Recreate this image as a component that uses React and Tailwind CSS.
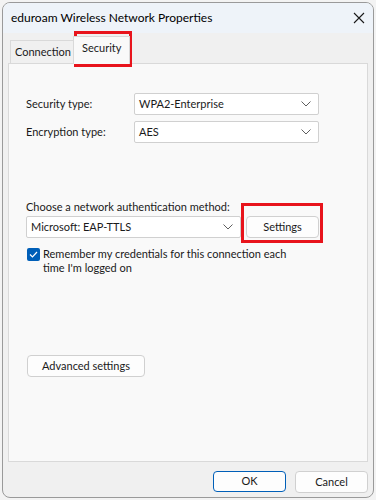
import React from 'react';

function Chevron() {
  return (
    <svg width="10" height="6" viewBox="0 0 10 6" className="shrink-0">
      <path d="M0.5 0.5 L5 5 L9.5 0.5" fill="none" stroke="#5f5f5f" strokeWidth="1" />
    </svg>
  );
}

function Select({ value, className }) {
  return (
    <div className={`h-[22px] bg-white border border-[#d0d0d0] rounded-[2px] flex items-center justify-between pl-[4px] pr-[7px] ${className}`}>
      <span>{value}</span>
      <Chevron />
    </div>
  );
}

function Button({ children, className }) {
  return (
    <div className={`h-[22px] bg-[#fdfdfd] border border-[#d0d0d0] rounded-[4px] flex items-center justify-center ${className}`}>
      {children}
    </div>
  );
}

export default function App() {
  return (
    <div
      className="w-[376px] h-[500px] bg-[#f3f3f3] pt-[2px] pl-[2px] relative overflow-hidden text-[11px] text-[#1a1a1a]"
      style={{ fontFamily: 'Lato, "Liberation Sans", sans-serif' }}
    >
      {/* Window */}
      <div className="w-[372px] h-[496px] bg-[#f0f0f0] border border-[#9a9a9a] rounded-[8px] overflow-hidden flex flex-col">
        {/* Title bar */}
        <div className="h-[30px] shrink-0 bg-[#eef3f9] flex items-center justify-between pl-[8px] pr-[5px]">
          <span className="text-[12px] text-black">eduroam Wireless Network Properties</span>
          <svg width="12" height="12" viewBox="0 0 12 12" className="mr-[3px]">
            <path d="M1 1 L11 11 M11 1 L1 11" stroke="#1a1a1a" strokeWidth="1.1" />
          </svg>
        </div>

        {/* Tabs */}
        <div className="h-[30px] shrink-0 flex items-end pl-[7px]">
          <div className="h-[23px] w-[63px] pl-[4px] flex items-center bg-[#f0f0f0] border border-b-0 border-[#d9d9d9] border-r-0 whitespace-nowrap">
            Connection
          </div>
          <div className="h-[28px] w-[57px] pl-[8px] flex items-start pt-[3px] bg-[#f9f9f9] border border-b-0 border-[#d9d9d9] -mb-px relative z-10">
            Security
          </div>
        </div>

        {/* Panel */}
        <div className="ml-[5px] w-[360px] h-[399px] bg-[#f9f9f9] border border-[#d9d9d9] pl-[17px] pr-[48px] pt-[29px]">
          <div className="flex items-center">
            <span className="w-[108px]">Security type:</span>
            <Select value="WPA2-Enterprise" className="w-[185px]" />
          </div>
          <div className="flex items-center mt-[6px]">
            <span className="w-[108px]">Encryption type:</span>
            <Select value="AES" className="w-[185px]" />
          </div>

          <div className="mt-[56px] leading-[16px]">Choose a network authentication method:</div>
          <div className="flex items-center mt-[1px]">
            <Select value="Microsoft: EAP-TTLS" className="w-[215px]" />
            <Button className="w-[73px] ml-[5px] h-[21px]">Settings</Button>
          </div>
          <div className="flex items-start mt-[9px] pl-[1px]">
            <div className="w-[13px] h-[13px] mt-[1px] rounded-[2px] bg-[#005fb8] flex items-center justify-center shrink-0">
              <svg width="9" height="7" viewBox="0 0 9 7">
                <path d="M1 3.5 L3.5 6 L8 1" fill="none" stroke="white" strokeWidth="1.2" />
              </svg>
            </div>
            <div className="ml-[3px] leading-[14px] w-[250px]">
              Remember my credentials for this connection each time I'm logged on
            </div>
          </div>

          <Button className="w-[118px] mt-[80px] ml-[1px]">Advanced settings</Button>
        </div>

        {/* Footer */}
        <div className="flex justify-end gap-[9px] pr-[5px] mt-[9px]">
          <div className="w-[73px] h-[21px] bg-[#fdfdfd] border border-[#005fb8] rounded-[4px] flex items-center justify-center">
            OK
          </div>
          <Button className="w-[73px] h-[21px]">Cancel</Button>
        </div>
      </div>

      {/* Annotation boxes */}
      <div className="absolute left-[74px] top-[31px] w-[58px] h-[36px] border-[3px] border-[#e8141c]" />
      <div className="absolute left-[241px] top-[203px] w-[82px] h-[40px] border-[3px] border-[#e8141c]" />
    </div>
  );
}
